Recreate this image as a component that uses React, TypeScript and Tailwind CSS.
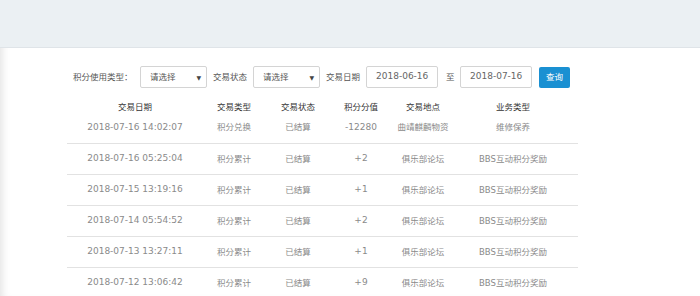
import React from "react";

const rows = [
  { date: "2018-07-16 14:02:07", type: "积分兑换", status: "已结算", value: "-12280", place: "曲靖麒麟物资", biz: "维修保养" },
  { date: "2018-07-16 05:25:04", type: "积分累计", status: "已结算", value: "+2", place: "俱乐部论坛", biz: "BBS互动积分奖励" },
  { date: "2018-07-15 13:19:16", type: "积分累计", status: "已结算", value: "+1", place: "俱乐部论坛", biz: "BBS互动积分奖励" },
  { date: "2018-07-14 05:54:52", type: "积分累计", status: "已结算", value: "+2", place: "俱乐部论坛", biz: "BBS互动积分奖励" },
  { date: "2018-07-13 13:27:11", type: "积分累计", status: "已结算", value: "+1", place: "俱乐部论坛", biz: "BBS互动积分奖励" },
  { date: "2018-07-12 13:06:42", type: "积分累计", status: "已结算", value: "+9", place: "俱乐部论坛", biz: "BBS互动积分奖励" },
];

// column widths chosen so that cell centres fall where the screenshot has them
const cols = "grid grid-cols-[136px_62px_66px_60px_64px_116px_7px]";

const Select = () => (
  <div className="flex h-[22px] w-[67px] items-center justify-between rounded-[2px] border border-[#d4d4d4] bg-white pl-[9px] pr-[5px] text-[8.5px] text-[#555]">
    <span>请选择</span>
    <span className="text-[6px] text-[#444]">▼</span>
  </div>
);

const DateBox = ({ value }: { value: string }) => (
  <div className="flex h-[22px] w-[72px] items-center rounded-[2px] border border-[#d4d4d4] bg-white pl-[9px] text-[9px] text-[#666]">
    {value}
  </div>
);

export default function App() {
  return (
    <div
      className="h-[296px] w-[700px] overflow-hidden bg-white shadow-[inset_8px_0_8px_-6px_rgba(0,0,0,0.12)]"
      style={{ fontFamily: '"DejaVu Sans", "Noto Sans CJK SC", sans-serif' }}
    >
      <div className="h-[48px] border-b border-[#dfe4e8] bg-[#ebf0f3]" />

      <div className="ml-[73px] mt-[18px] flex items-center text-[8.5px] text-[#555]">
        <span className="w-[67px]">积分使用类型：</span>
        <Select />
        <span className="ml-[6px] mr-[6px] w-[34px]">交易状态</span>
        <Select />
        <span className="ml-[6px] mr-[6px] w-[34px]">交易日期</span>
        <DateBox value="2018-06-16" />
        <span className="ml-[8px] mr-[5px] w-[9px]">至</span>
        <DateBox value="2018-07-16" />
        <button className="ml-[7px] h-[21px] w-[31px] rounded-[2px] bg-[#1a90d2] text-[8.5px] text-white">查询</button>
      </div>

      <div className="ml-[67px] mt-[10px] w-[511px] text-[8.5px]">
        <div className={`${cols} h-[18px] items-center text-center text-[#333]`}>
          <span>交易日期</span>
          <span>交易类型</span>
          <span>交易状态</span>
          <span>积分分值</span>
          <span>交易地点</span>
          <span>业务类型</span>
          <span />
        </div>
        {rows.map((r, i) => (
          <div
            key={i}
            className={`${cols} ${i === 0 ? "h-[28px] pb-[4px]" : "h-[31px]"} items-center border-b border-[#e2e2e2] text-center text-[#8a8a8a]`}
          >
            <span className="text-[9px]">{r.date}</span>
            <span>{r.type}</span>
            <span>{r.status}</span>
            <span className="text-[9px]">{r.value}</span>
            <span>{r.place}</span>
            <span>{r.biz}</span>
            <span />
          </div>
        ))}
      </div>
    </div>
  );
}
